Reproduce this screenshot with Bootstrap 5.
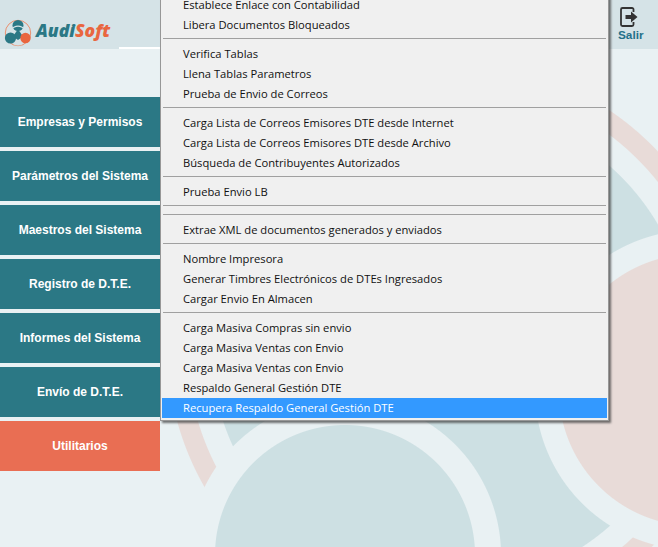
<!DOCTYPE html>
<html lang="es">
<head>
<meta charset="utf-8">
<title>AudiSoft</title>
<link href="https://cdn.jsdelivr.net/npm/bootstrap@5.3.0/dist/css/bootstrap.min.css" rel="stylesheet">
<style>
html,body{height:100%;}
body{
  overflow:hidden;position:relative;font-family:"Liberation Sans",Arial,sans-serif;
  background-color:#e9f1f3;
  background-image:
    radial-gradient(circle 136px at 695px 390px,#e8dbd8 135.5px,transparent 136.5px),
    radial-gradient(circle 160px at 695px 390px,#e9f1f3 159.5px,transparent 160.5px),
    radial-gradient(circle 130px at 345px 555px,#cde0e3 129.5px,transparent 130.5px),
    radial-gradient(circle 156px at 345px 555px,#e9f1f3 155.5px,transparent 156.5px),
    radial-gradient(circle 240px at 451px 346px,#cde0e3 239.5px,transparent 240.5px),
    radial-gradient(circle 264px at 451px 346px,#e9f1f3 263.5px,transparent 264.5px),
    radial-gradient(circle 284px at 451px 346px,#e8dbd8 283.5px,transparent 284.5px);
}
.topbar{height:49px;background:#d5e3e7;}
.brand-box{width:119px;height:49px;padding:17px 0 0 4px;}
.brand-name{font-family:"Open Sans",sans-serif;font-weight:800;font-style:italic;font-size:17.5px;color:#2b7885;line-height:1;margin-top:-4px;margin-left:4px;}
.brand-name span{color:#e9663f;}
.top-gap{width:41px;height:49px;border-bottom:2px solid #fff;}
.exit-box{width:40px;color:#24708a;font-size:11.8px;font-weight:700;line-height:14px;padding:7px 0 0 0;}
.exit-box svg{display:block;margin:0 0 1px 1px;}
.side-nav{width:160px;margin-top:48px;gap:4px;}
.side-btn{height:50px;background:#2b7885;color:#fff;font-weight:700;font-size:12px;border:0;border-radius:0;padding:0;}
.side-btn:hover,.side-btn:focus{background:#2b7885;color:#fff;}
.side-btn.side-on,.side-btn.side-on:hover{background:#e96e53;color:#fff;}
.app-menu.dropdown-menu{
  display:block;position:absolute;left:160px;top:-8px;width:449px;margin:0;padding:2px 1px 2px 1px;
  background:#f0f0f0;border:1px solid #979797;border-radius:0;
  box-shadow:2px 2px 2px rgba(70,70,70,.75);
  font-family:"Open Sans",sans-serif;font-size:11.2px;
}
.app-menu .dropdown-item{height:20px;line-height:20px;padding:0 0 0 21px;color:#111;background:transparent;}
.app-menu .dropdown-item.item-on{background:#3399ff;color:#fff;}
.app-menu .dropdown-divider{height:9px;margin:0;border:0;padding-top:3px;}
.app-menu .dropdown-divider::before{content:"";display:block;height:1px;margin:0 1px 0 1px;background:#a0a0a0;}
</style>
</head>
<body>
<header class="topbar d-flex">
  <div class="brand-box d-flex align-items-center">
    <svg width="28" height="28" viewBox="0 0 28 28" class="flex-shrink-0"><circle cx="14" cy="14" r="12.700" fill="none" stroke="#e9906f" stroke-width="1"/><path d="M9 17.500L14 10L19 17.500L14 21Z" fill="#2b7885"/><circle cx="14" cy="6.500" r="5.500" fill="#2b7885"/><circle cx="6.500" cy="19" r="5.600" fill="#2b7885"/><circle cx="21.500" cy="19" r="5.200" fill="#e9663f"/><path d="M7.500 10.500A8 8 0 0 1 20.500 10.500M10 25A9 9 0 0 0 18 25" fill="none" stroke="#d5e3e7" stroke-width="1.200"/></svg>
    <div class="brand-name">Audi<span>Soft</span></div>
  </div>
  <div class="top-gap"></div>
  <div class="flex-grow-1"></div>
  <div class="exit-box">
    <svg width="20" height="20" viewBox="0 0 20 20"><path d="M14.500 5V2.500A1.500 1.500 0 0 0 13 1H3.500A1.500 1.500 0 0 0 2 2.500V17.500A1.500 1.500 0 0 0 3.500 19H13A1.500 1.500 0 0 0 14.500 17.500V15" fill="none" stroke="#333" stroke-width="1.800"/><path d="M6.500 8H12V4.500L18.500 10L12 15.500V12H6.500Z" fill="#333"/></svg>
    Salir
  </div>
</header>
<nav class="side-nav d-flex flex-column">
  <button class="btn side-btn">Empresas y Permisos</button>
  <button class="btn side-btn">Parámetros del Sistema</button>
  <button class="btn side-btn">Maestros del Sistema</button>
  <button class="btn side-btn">Registro de D.T.E.</button>
  <button class="btn side-btn">Informes del Sistema</button>
  <button class="btn side-btn">Envío de D.T.E.</button>
  <button class="btn side-btn side-on">Utilitarios</button>
</nav>
<ul class="dropdown-menu app-menu list-unstyled">
  <li><a class="dropdown-item" href="#">Establece Enlace con Contabilidad</a></li>
  <li><a class="dropdown-item" href="#">Libera Documentos Bloqueados</a></li>
  <li><div class="dropdown-divider"></div></li>
  <li><a class="dropdown-item" href="#">Verifica Tablas</a></li>
  <li><a class="dropdown-item" href="#">Llena Tablas Parametros</a></li>
  <li><a class="dropdown-item" href="#">Prueba de Envio de Correos</a></li>
  <li><div class="dropdown-divider"></div></li>
  <li><a class="dropdown-item" href="#">Carga Lista de Correos Emisores DTE desde Internet</a></li>
  <li><a class="dropdown-item" href="#">Carga Lista de Correos Emisores DTE desde Archivo</a></li>
  <li><a class="dropdown-item" href="#">Búsqueda de Contribuyentes Autorizados</a></li>
  <li><div class="dropdown-divider"></div></li>
  <li><a class="dropdown-item" href="#">Prueba Envio LB</a></li>
  <li><div class="dropdown-divider"></div></li>
  <li><div class="dropdown-divider"></div></li>
  <li><a class="dropdown-item" href="#">Extrae XML de documentos generados y enviados</a></li>
  <li><div class="dropdown-divider"></div></li>
  <li><a class="dropdown-item" href="#">Nombre Impresora</a></li>
  <li><a class="dropdown-item" href="#">Generar Timbres Electrónicos de DTEs Ingresados</a></li>
  <li><a class="dropdown-item" href="#">Cargar Envio En Almacen</a></li>
  <li><div class="dropdown-divider"></div></li>
  <li><a class="dropdown-item" href="#">Carga Masiva Compras sin envio</a></li>
  <li><a class="dropdown-item" href="#">Carga Masiva Ventas con Envio</a></li>
  <li><a class="dropdown-item" href="#">Carga Masiva Ventas con Envio</a></li>
  <li><a class="dropdown-item" href="#">Respaldo General Gestión DTE</a></li>
  <li><a class="dropdown-item item-on" href="#">Recupera Respaldo General Gestión DTE</a></li>
</ul>
<script src="https://cdn.jsdelivr.net/npm/bootstrap@5.3.0/dist/js/bootstrap.bundle.min.js"></script>
</body>
</html>
